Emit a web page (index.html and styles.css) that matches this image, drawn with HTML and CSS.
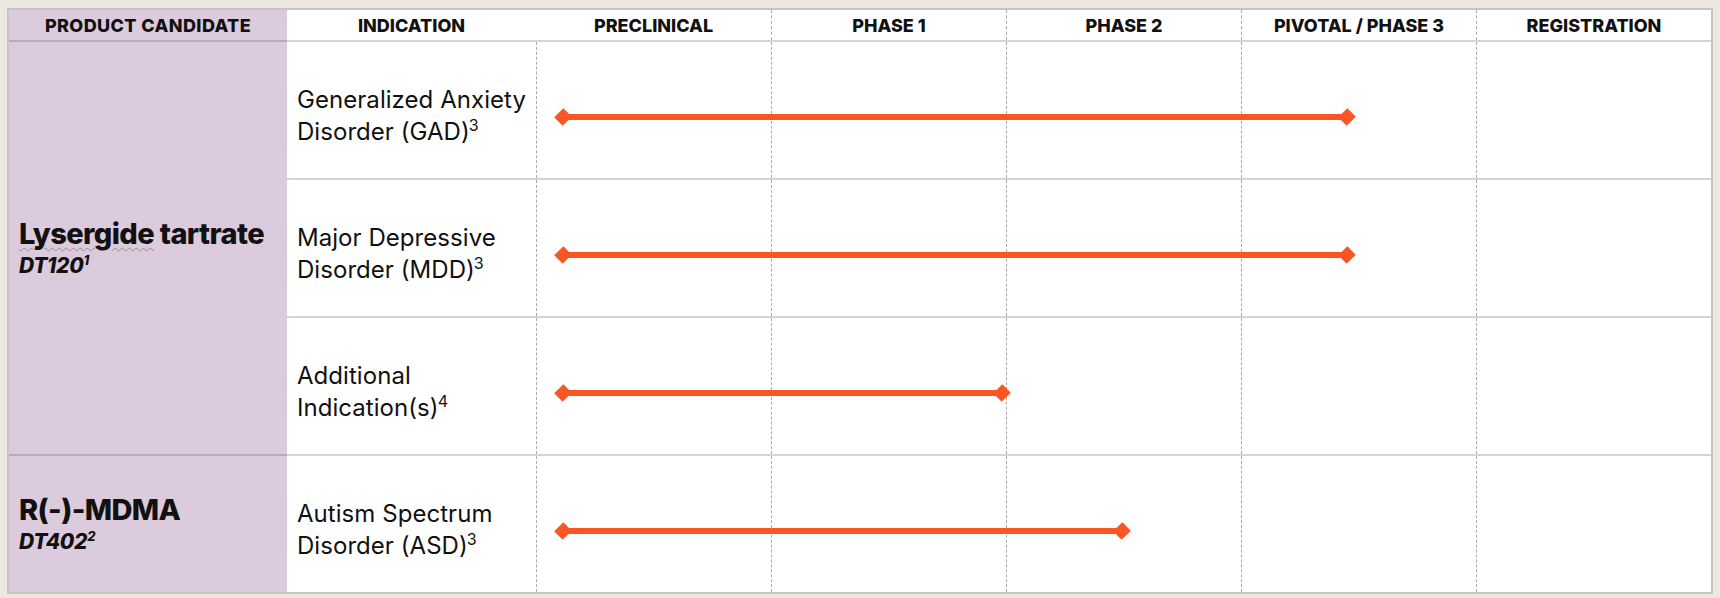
FILE: index.html
```html
<!DOCTYPE html>
<html lang="en">
<head>
<meta charset="utf-8">
<title>Pipeline</title>
<link rel="stylesheet" href="styles.css">
</head>
<body>
<div class="table">
  <div class="head">
    <div class="hcell hprod">PRODUCT CANDIDATE</div>
    <div class="hcell">INDICATION</div>
    <div class="hcell">PRECLINICAL</div>
    <div class="hcell dash">PHASE 1</div>
    <div class="hcell dash">PHASE 2</div>
    <div class="hcell dash">PIVOTAL / PHASE 3</div>
    <div class="hcell dash">REGISTRATION</div>
  </div>

  <div class="group">
    <div class="product">
      <div class="pname"><span class="spell">Lysergide</span> tartrate</div>
      <div class="pcode">DT120<sup>1</sup></div>
    </div>
    <div class="rows">
      <div class="row">
        <div class="ind">Generalized Anxiety Disorder (GAD)<sup>3</sup></div>
        <div class="track">
          <div class="ph"></div><div class="ph"></div><div class="ph"></div><div class="ph"></div><div class="ph"></div>
          <div class="bar" style="left:27px;width:784px"></div>
        </div>
      </div>
      <div class="row">
        <div class="ind">Major Depressive Disorder (MDD)<sup>3</sup></div>
        <div class="track">
          <div class="ph"></div><div class="ph"></div><div class="ph"></div><div class="ph"></div><div class="ph"></div>
          <div class="bar" style="left:27px;width:784px"></div>
        </div>
      </div>
      <div class="row">
        <div class="ind">Additional<br>Indication(s)<sup>4</sup></div>
        <div class="track">
          <div class="ph"></div><div class="ph"></div><div class="ph"></div><div class="ph"></div><div class="ph"></div>
          <div class="bar" style="left:27px;width:439px"></div>
        </div>
      </div>
    </div>
  </div>

  <div class="group last">
    <div class="product">
      <div class="pname">R(-)-MDMA</div>
      <div class="pcode">DT402<sup>2</sup></div>
    </div>
    <div class="rows">
      <div class="row">
        <div class="ind">Autism Spectrum Disorder (ASD)<sup>3</sup></div>
        <div class="track">
          <div class="ph"></div><div class="ph"></div><div class="ph"></div><div class="ph"></div><div class="ph"></div>
          <div class="bar" style="left:27px;width:559px"></div>
        </div>
      </div>
    </div>
  </div>
</div>
</body>
</html>
```

FILE: styles.css
```css
* { box-sizing: border-box; }

html, body {
  margin: 0;
  padding: 0;
  background: #ebe8e1;
}

body {
  padding: 8px 7px 4px 7px;
  font-family: "Inter", "Liberation Sans", sans-serif;
  color: #111;
}

.table {
  width: 1706px;
  border: 2px solid #c9c4bc;
  background: #fff;
}

.head {
  display: grid;
  grid-template-columns: 278px 249px repeat(5, 1fr);
  height: 32px;
  border-bottom: 2px solid #d4d4d4;
}

.hcell {
  display: flex;
  align-items: center;
  justify-content: center;
  font-weight: 800;
  font-size: 18px;
  letter-spacing: 0;
  color: #111;
  padding-top: 1px;
}

.hprod {
  background: #dccadd;
  box-shadow: 0 2px 0 #bba9bb;
  letter-spacing: 0.4px;
}

.hcell.dash {
  border-left: 1px dashed #a9a9a9;
}

.group {
  display: grid;
  grid-template-columns: 278px 1fr;
}

.product {
  background: #dccadd;
  display: flex;
  flex-direction: column;
  justify-content: center;
  padding-left: 10px;
  padding-top: 2px;
  border-bottom: 2px solid #bba9bb;
}

.group.last .product {
  border-bottom: none;
}

.pname {
  font-weight: 800;
  font-size: 29px;
  letter-spacing: -0.6px;
  line-height: 34px;
}

.spell {
  text-decoration: underline wavy #8e8e8e;
  text-decoration-thickness: 1px;
  text-underline-offset: 3px;
}

.pcode {
  font-weight: 800;
  font-style: italic;
  font-size: 21px;
  letter-spacing: -0.3px;
  line-height: 30px;
}

.pcode sup {
  font-size: 13px;
  vertical-align: 8px;
  line-height: 0;
  margin-left: 0;
}

.rows {
  display: flex;
  flex-direction: column;
}

.row {
  display: grid;
  grid-template-columns: 249px 1fr;
  height: 138px;
  border-bottom: 2px solid #d4d4d4;
}

.group.last .row:last-child {
  height: 136px;
  border-bottom: none;
}

.ind {
  align-self: center;
  padding: 12px 10px 0 10px;
  font-size: 24px;
  line-height: 32px;
  letter-spacing: 0.05px;
  font-weight: 400;
  color: #111;
}

.ind sup {
  font-size: 16px;
  line-height: 0;
  vertical-align: 9px;
  margin-left: -1px;
}

.track {
  position: relative;
  display: grid;
  grid-template-columns: repeat(5, 1fr);
}

.ph {
  border-left: 1px dashed #a9a9a9;
}

.bar {
  position: absolute;
  top: 72px;
  height: 6px;
  background: #fa5525;
}

.bar::before,
.bar::after {
  content: "";
  position: absolute;
  top: 50%;
  width: 12px;
  height: 13px;
  background: #fa5525;
  transform: translate(-50%, -50%) rotate(45deg);
}

.bar::before { left: 0; }
.bar::after { left: 100%; }
```
